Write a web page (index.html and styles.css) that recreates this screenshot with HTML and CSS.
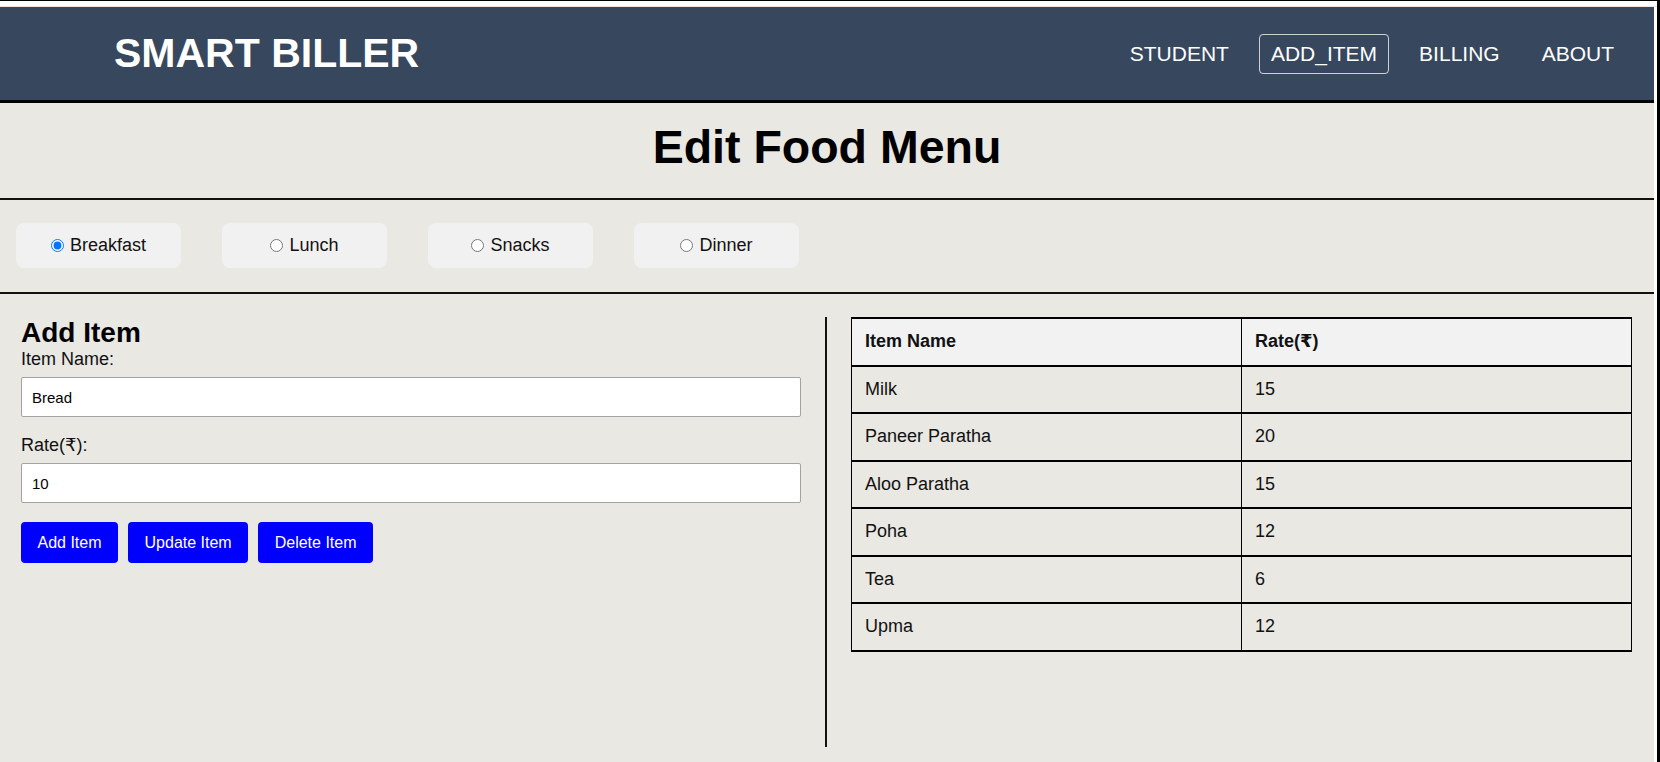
FILE: index.html
```html
<!DOCTYPE html>
<html lang="en">
<head>
<meta charset="utf-8">
<title>Smart Biller - Edit Food Menu</title>
<link rel="stylesheet" href="styles.css">
</head>
<body>
<div class="app">
  <header class="navbar">
    <div class="logo">SMART BILLER</div>
    <nav class="nav-links">
      <a class="nav-link" href="#">STUDENT</a>
      <a class="nav-link nav-link-active" href="#">ADD_ITEM</a>
      <a class="nav-link" href="#">BILLING</a>
      <a class="nav-link" href="#">ABOUT</a>
    </nav>
  </header>

  <section class="title-bar">
    <h1 class="page-title">Edit Food Menu</h1>
  </section>

  <section class="meal-bar">
    <label class="meal-pill"><input class="meal-radio" type="radio" name="meal" checked>Breakfast</label>
    <label class="meal-pill"><input class="meal-radio" type="radio" name="meal">Lunch</label>
    <label class="meal-pill"><input class="meal-radio" type="radio" name="meal">Snacks</label>
    <label class="meal-pill"><input class="meal-radio" type="radio" name="meal">Dinner</label>
  </section>

  <main class="workspace">
    <div class="editor">
      <h2 class="editor-title">Add Item</h2>
      <label class="field-label" for="item-name">Item Name:</label>
      <input class="text-input" id="item-name" type="text" value="Bread">
      <label class="field-label" for="item-rate">Rate(₹):</label>
      <input class="text-input" id="item-rate" type="text" value="10">
      <div class="actions">
        <button class="action-btn" type="button">Add Item</button>
        <button class="action-btn" type="button">Update Item</button>
        <button class="action-btn" type="button">Delete Item</button>
      </div>
    </div>

    <div class="menu-list">
      <table class="menu-table">
        <thead>
          <tr><th>Item Name</th><th>Rate(₹)</th></tr>
        </thead>
        <tbody>
          <tr><td>Milk</td><td>15</td></tr>
          <tr><td>Paneer Paratha</td><td>20</td></tr>
          <tr><td>Aloo Paratha</td><td>15</td></tr>
          <tr><td>Poha</td><td>12</td></tr>
          <tr><td>Tea</td><td>6</td></tr>
          <tr><td>Upma</td><td>12</td></tr>
        </tbody>
      </table>
    </div>
  </main>
</div>
</body>
</html>
```

FILE: styles.css
```css
* {
  box-sizing: border-box;
}

html {
  border-top: 1px solid #000;
  border-right: 3px solid #000;
  background: #fff;
}

body {
  margin: 0;
  padding: 6px 3px 0 0;
  height: calc(100vh - 1px);
  display: flex;
  flex-direction: column;
  font-family: "Liberation Sans", Arial, "DejaVu Sans", sans-serif;
  color: #000;
  background: linear-gradient(to bottom, #fff 0, #fff 5px, #f3e2e2 5px, #f3e2e2 6px, #fff 6px);
}

.app {
  flex: 1;
  display: flex;
  flex-direction: column;
  background: #e9e8e3;
}

/* Navbar */
.navbar {
  height: 96px;
  display: flex;
  align-items: center;
  justify-content: space-between;
  padding: 0 28px 0 114px;
  background: #37475e;
  border-bottom: 3px solid #000;
}

.logo {
  color: #fff;
  font-size: 41px;
  font-weight: bold;
  line-height: 1;
}

.nav-links {
  display: flex;
  align-items: center;
  gap: 18px;
}

.nav-link {
  color: #fff;
  text-decoration: none;
  font-size: 21px;
  line-height: 24px;
  padding: 7px 11px;
  border: 1px solid transparent;
  border-radius: 4px;
}

.nav-link-active {
  border-color: rgba(255, 255, 255, 0.75);
}

/* Title */
.title-bar {
  padding: 18px 0 24px;
  border-bottom: 2px solid #111;
}

.page-title {
  margin: 0;
  text-align: center;
  font-size: 46.5px;
  line-height: 53px;
  font-weight: bold;
}

/* Meal selector */
.meal-bar {
  display: flex;
  gap: 41px;
  padding: 23px 16px 24px;
  border-bottom: 2px solid #111;
}

.meal-pill {
  width: 165px;
  height: 45px;
  display: flex;
  align-items: center;
  justify-content: center;
  background: #f1f1f1;
  border-radius: 8px;
  font-size: 18px;
  color: #111;
}

.meal-radio {
  width: 13px;
  height: 13px;
  margin: 0 6px 0 0;
}

/* Workspace */
.workspace {
  display: flex;
  align-items: flex-start;
  padding-top: 23px;
}

.editor {
  width: 827px;
  height: 430px;
  padding: 2px 24px 0 21px;
  border-right: 2px solid #111;
  display: flex;
  flex-direction: column;
}

.editor-title {
  margin: 0 0 1px;
  font-size: 28px;
  line-height: 28px;
  font-weight: bold;
}

.field-label {
  display: block;
  font-size: 18px;
  line-height: 22px;
  margin-bottom: 7px;
  color: #111;
}

.text-input {
  width: 100%;
  height: 40px;
  margin: 0 0 17px;
  padding: 0 10px;
  border: 1px solid #a3a3a3;
  border-radius: 2px;
  background: #fff;
  font-family: inherit;
  font-size: 15px;
  color: #000;
}

.actions {
  display: flex;
  gap: 10px;
  margin-top: 2px;
}

.action-btn {
  height: 41px;
  padding: 0 16.5px;
  border: none;
  border-radius: 4px;
  background: #0000ff;
  color: #fff;
  font-family: inherit;
  font-size: 16px;
}

.menu-list {
  flex: 1;
  padding: 0 22px 0 24px;
}

.menu-table {
  width: 100%;
  border-collapse: collapse;
  table-layout: fixed;
  font-size: 18px;
  color: #111;
}

.menu-table th,
.menu-table td {
  text-align: left;
  padding: 12px 13px;
  line-height: 21.5px;
  border-style: solid;
  border-color: #000;
  border-width: 2px 1px;
}

.menu-table th {
  background: #f2f2f2;
  font-weight: bold;
}
```
